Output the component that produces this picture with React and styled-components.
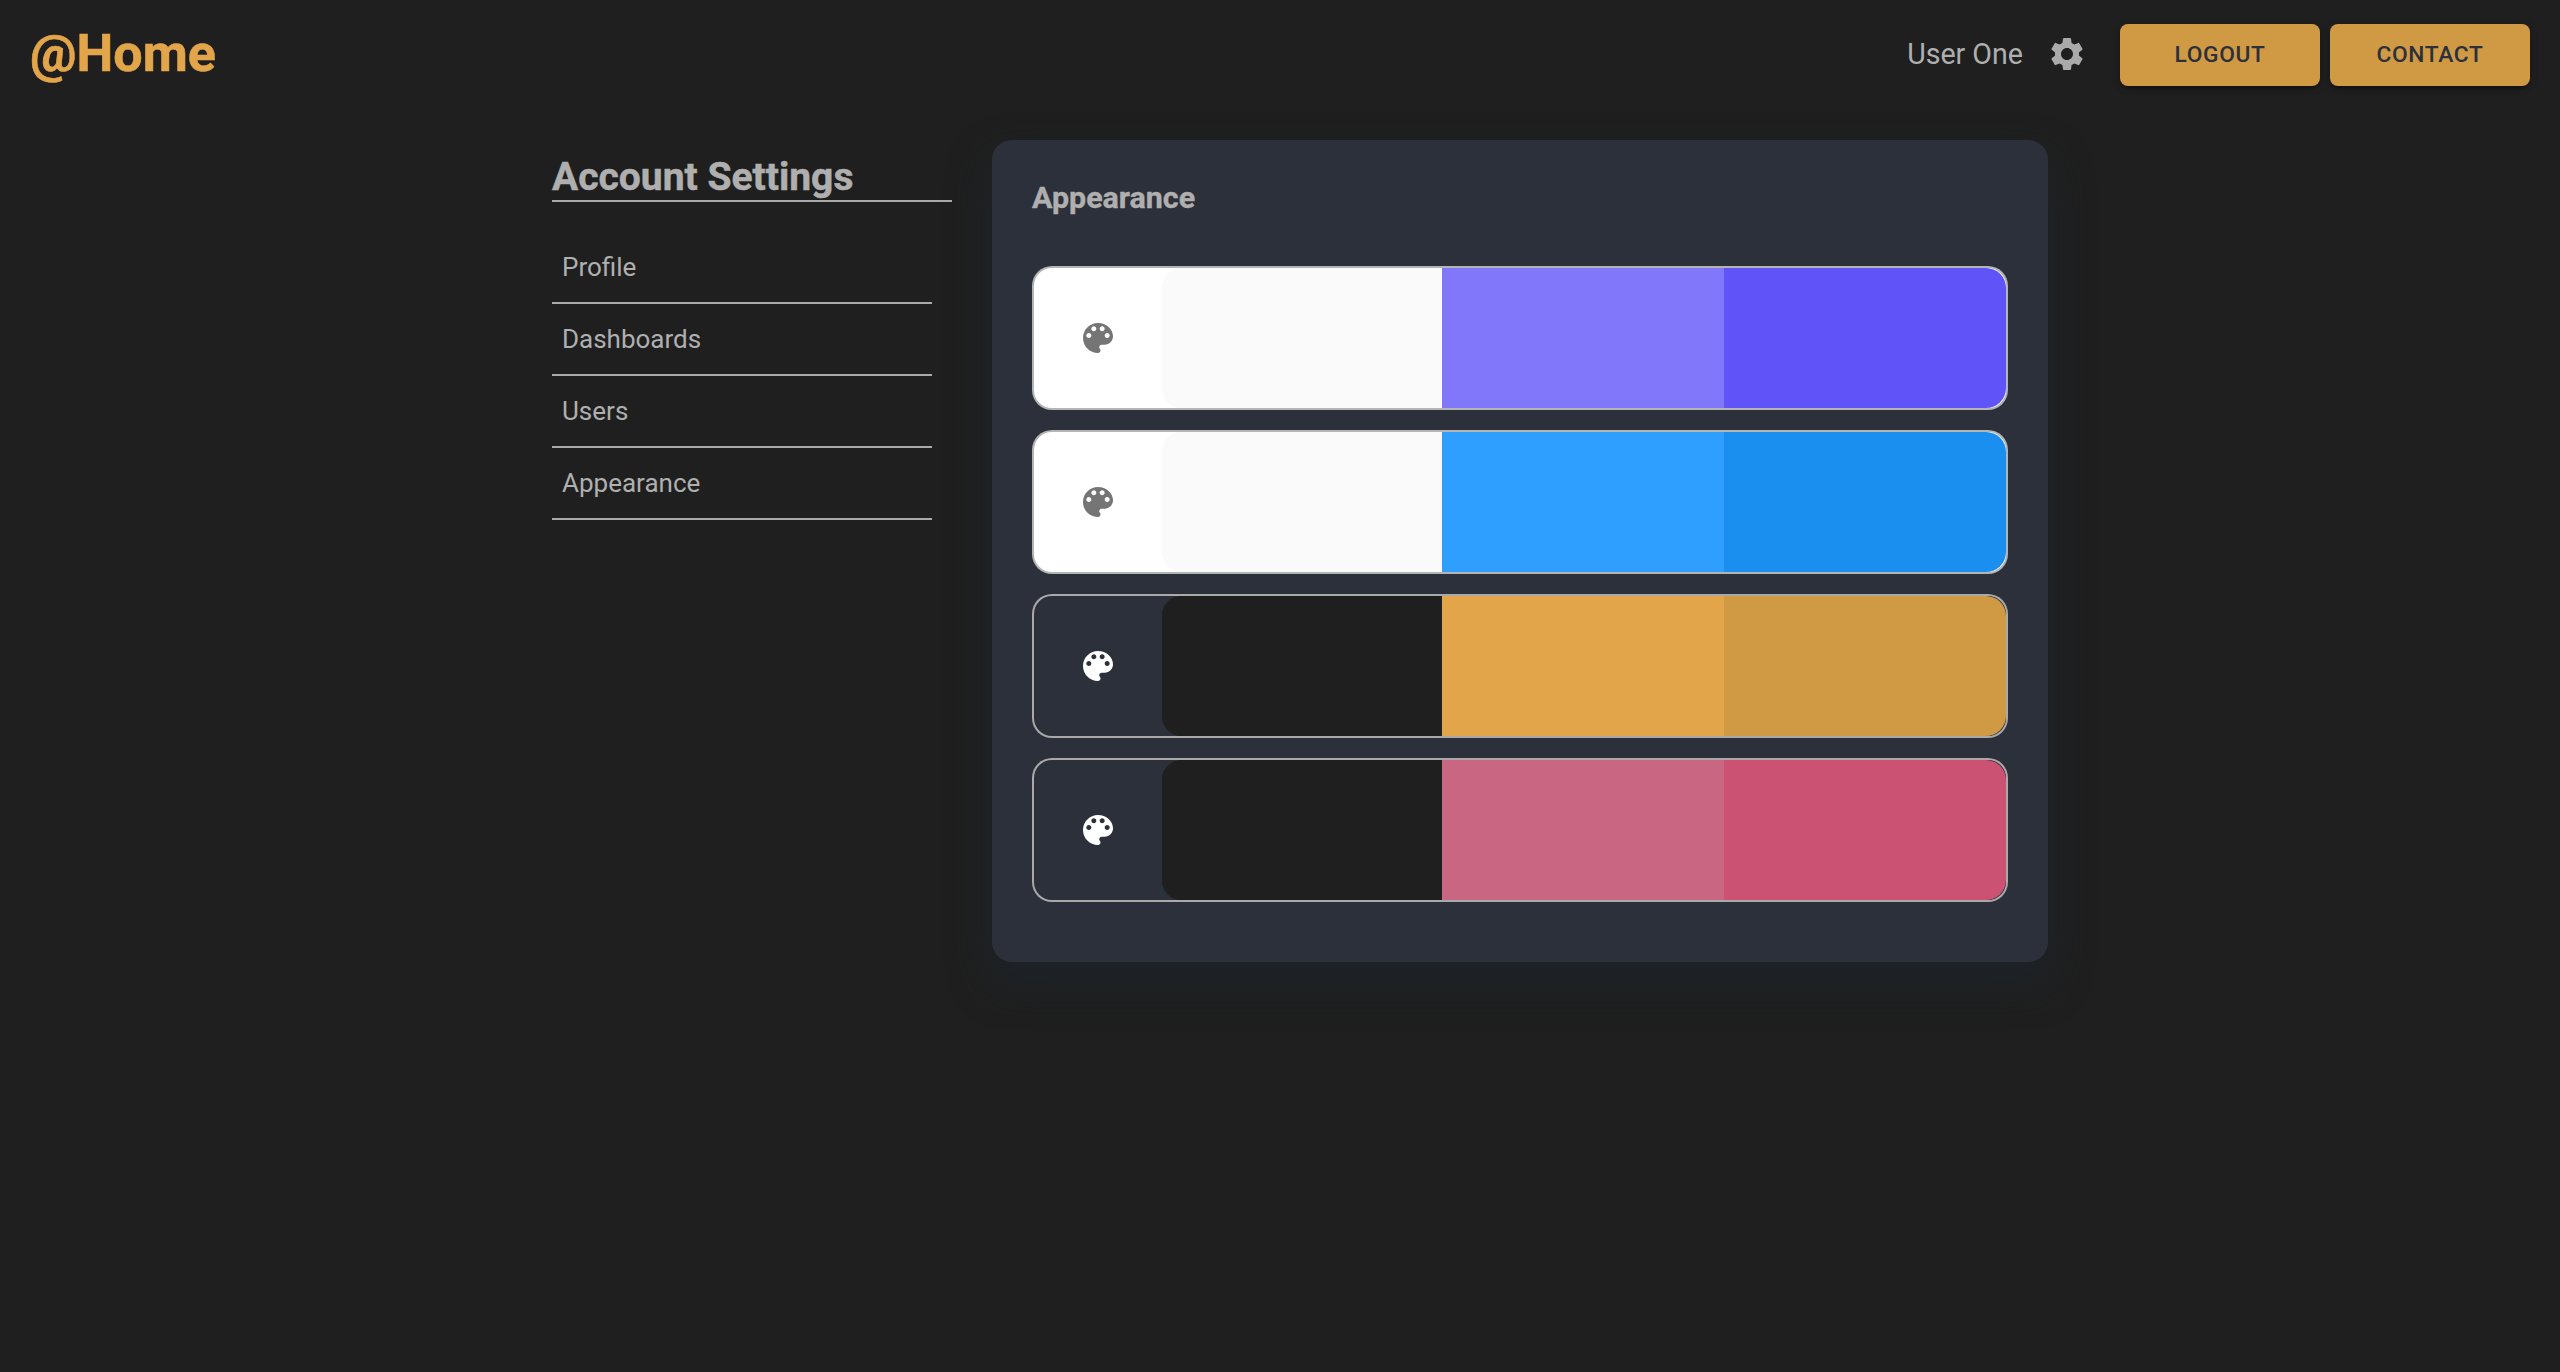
import React from "react";
import styled, { createGlobalStyle } from "styled-components";
import { MdSettings } from "react-icons/md";

const GlobalStyle = createGlobalStyle`
  * { box-sizing: border-box; }
  body {
    margin: 0;
    background: #1f1f1f;
    color: #afafaf;
    font-family: Roboto, sans-serif;
  }
`;

const Page = styled.div`
  min-height: 100vh;
`;

const Header = styled.header`
  display: flex;
  align-items: center;
  height: 110px;
  padding: 0 30px;
`;

const Brand = styled.div`
  margin-right: auto;
  padding-bottom: 2px;
  font-size: 52px;
  font-weight: 700;
  -webkit-text-stroke: 0.6px currentColor;
  line-height: 64px;
  color: #e3a54a;
`;

const UserName = styled.span`
  font-size: 28.6px;
  margin-right: 24px;
  padding-bottom: 2px;
`;

const SettingsIcon = styled(MdSettings)`
  width: 40px;
  height: 40px;
  margin: 0 33px 2px 0;
  color: #aaaaaa;
`;

const Actions = styled.div`
  display: flex;
  gap: 10px;
`;

const ActionButton = styled.button`
  width: 200px;
  height: 62px;
  padding: 0 0 1px;
  border: none;
  border-radius: 8px;
  background: #d09a45;
  color: #2c303a;
  font: 500 22.75px/32px Roboto, sans-serif;
  letter-spacing: 0.65px;
  box-shadow: 0 6px 2px -4px rgba(0, 0, 0, 0.2), 0 4px 4px rgba(0, 0, 0, 0.14),
    0 2px 10px rgba(0, 0, 0, 0.12);
`;

const Content = styled.main`
  display: flex;
  align-items: flex-start;
  gap: 40px;
  width: 1496px;
  margin-left: 552px;
  padding-top: 30px;
`;

const Sidebar = styled.aside`
  width: 400px;
`;

const SidebarTitle = styled.h1`
  height: 62px;
  margin: 0;
  padding-top: 14px;
  border-bottom: 2px solid #aaaaaa;
  font-size: 39px;
  font-weight: 700;
  -webkit-text-stroke: 0.5px currentColor;
  line-height: 46px;
`;

const Menu = styled.nav`
  width: 380px;
  padding-top: 30px;
`;

const MenuItem = styled.div`
  height: 72px;
  padding: 0 10px;
  border-bottom: 2px solid #aaaaaa;
  font-size: 26px;
  line-height: 70px;
`;

const Card = styled.section`
  width: 1056px;
  height: 822px;
  padding: 40px;
  border-radius: 20px;
  background: #2c303a;
  box-shadow: 0 20px 40px rgba(30, 37, 46, 0.75);
`;

const CardTitle = styled.h2`
  height: 86px;
  margin: 0;
  font-size: 30.42px;
  font-weight: 700;
  -webkit-text-stroke: 0.4px currentColor;
  line-height: 35px;
`;

const ThemeList = styled.div`
  display: grid;
  gap: 20px;
`;

const ThemeRow = styled.div`
  display: grid;
  grid-template-columns: 128px 1fr;
  height: 144px;
  border: 2px solid rgba(176, 176, 176, 0.95);
  border-radius: 20px;
  background: ${(p) => p.$surface};
`;

const IconCell = styled.div`
  display: flex;
  align-items: center;
  justify-content: center;
  color: ${(p) => p.$color};

  svg {
    width: 40px;
    height: 40px;
    fill: currentColor;
  }
`;

const Swatches = styled.div`
  display: grid;
  grid-template-columns: 280px 282px 282px;
  border-radius: 20px;
  background: ${(p) => p.$color};
  overflow: hidden;
`;

const Swatch = styled.div`
  background: ${(p) => p.$color};
`;

const PaletteIcon = () => (
  <svg viewBox="0 0 24 24">
    <path d="M12 3c-4.97 0-9 4.03-9 9s4.03 9 9 9c.83 0 1.5-.67 1.5-1.5 0-.39-.15-.74-.39-1.01-.23-.26-.38-.61-.38-.99 0-.83.67-1.5 1.5-1.5H16c2.76 0 5-2.24 5-5 0-4.42-4.03-8-9-8zm-5.5 9c-.83 0-1.5-.67-1.5-1.5S5.67 9 6.5 9 8 9.67 8 10.5 7.33 12 6.5 12zm3-4C8.67 8 8 7.33 8 6.5S8.67 5 9.5 5s1.5.67 1.5 1.5S10.33 8 9.5 8zm5 0c-.83 0-1.5-.67-1.5-1.5S13.67 5 14.5 5s1.5.67 1.5 1.5S15.33 8 14.5 8zm3 4c-.83 0-1.5-.67-1.5-1.5S16.67 9 17.5 9s1.5.67 1.5 1.5-.67 1.5-1.5 1.5z" />
  </svg>
);

const themes = [
  { surface: "#ffffff", icon: "#757575", colors: ["#fafafa", "#8077fb", "#6054f9"] },
  { surface: "#ffffff", icon: "#757575", colors: ["#fafafa", "#2f9fff", "#1b8fef"] },
  { surface: "#2c303a", icon: "#ffffff", colors: ["#1f1f1f", "#e3a54a", "#d09a45"] },
  { surface: "#2c303a", icon: "#ffffff", colors: ["#1f1f1f", "#c96682", "#cc5274"] },
];

const menu = ["Profile", "Dashboards", "Users", "Appearance"];

export default function App() {
  return (
    <Page>
      <GlobalStyle />
      <Header>
        <Brand>@Home</Brand>
        <UserName>User One</UserName>
        <SettingsIcon />
        <Actions>
          <ActionButton>LOGOUT</ActionButton>
          <ActionButton>CONTACT</ActionButton>
        </Actions>
      </Header>
      <Content>
        <Sidebar>
          <SidebarTitle>Account Settings</SidebarTitle>
          <Menu>
            {menu.map((label) => (
              <MenuItem key={label}>{label}</MenuItem>
            ))}
          </Menu>
        </Sidebar>
        <Card>
          <CardTitle>Appearance</CardTitle>
          <ThemeList>
            {themes.map((t) => (
              <ThemeRow key={t.colors[1]} $surface={t.surface}>
                <IconCell $color={t.icon}>
                  <PaletteIcon />
                </IconCell>
                <Swatches $color={t.colors[0]}>
                  {t.colors.map((c) => (
                    <Swatch key={c} $color={c} />
                  ))}
                </Swatches>
              </ThemeRow>
            ))}
          </ThemeList>
        </Card>
      </Content>
    </Page>
  );
}
